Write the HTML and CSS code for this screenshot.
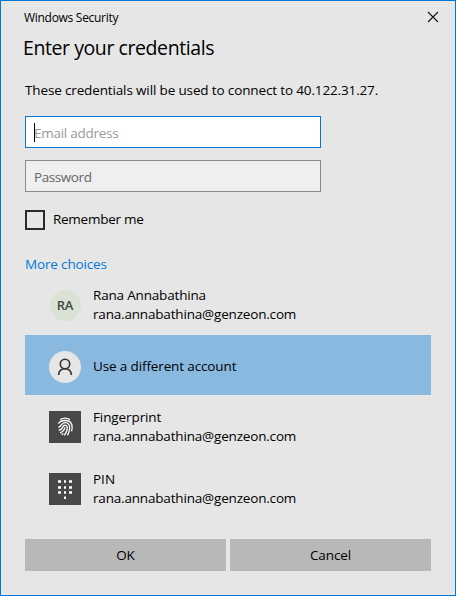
FILE: index.html
```html
<!DOCTYPE html>
<html lang="en">
<head>
<meta charset="utf-8">
<title>Windows Security</title>
<link rel="stylesheet" href="styles.css">
</head>
<body>
<main class="dialog">
  <header class="titlebar">
    <span class="caption">Windows Security</span>
    <svg class="close" width="12" height="12" viewBox="0 0 12 12"><path d="M1 1L11 11M11 1L1 11"/></svg>
  </header>
  <h1 class="heading">Enter your credentials</h1>
  <p class="message">These credentials will be used to connect to 40.122.31.27.</p>
  <div class="field field-active"><span class="caret"></span><span class="email">Email address</span></div>
  <div class="field"><span class="password">Password</span></div>
  <div class="remember"><span class="checkbox"></span><span class="remember-label">Remember me</span></div>
  <div class="more">More choices</div>
  <ul class="choices">
    <li class="choice choice-first">
      <span class="tile"><span class="initials">RA</span></span>
      <div class="lines"><div class="name-rana">Rana Annabathina</div><div class="mail">rana.annabathina@genzeon.com</div></div>
    </li>
    <li class="choice choice-selected">
      <span class="tile person">
        <svg width="32" height="32" viewBox="0 0 32 32"><circle cx="16" cy="13" r="4.7"/><path d="M9.6 24C9.8 20 12.3 17.7 16 17.7S22.2 20 22.4 24"/></svg>
      </span>
      <div class="lines"><div class="different">Use a different account</div></div>
    </li>
    <li class="choice">
      <span class="tile square">
        <svg class="finger" width="32" height="32" viewBox="0 0 32 32"><path d="M11.2 8.6C14.2 6.8 18 6.8 21 8.6M9.3 12.7C12.3 8.6 20.3 8.2 22.7 13.2C23.4 15.3 23.2 18 22.6 20.3M9.4 16.5C12.8 14.8 12.3 12 16 11.7C19.8 11.6 21 14.5 20.6 18C20.3 20.5 19.6 22.4 18.5 24.3M9.8 19.4C14.3 18.3 13.2 14.2 16.1 14.1C18.6 14.2 18.6 17.3 17.8 19.7C17.2 21.6 16.2 23.1 15 24.4M11 21.9C13.8 21 15.3 18.8 15.9 16.4M12.7 23.8L14.2 22.5"/></svg>
      </span>
      <div class="lines"><div class="name-finger">Fingerprint</div><div class="mail">rana.annabathina@genzeon.com</div></div>
    </li>
    <li class="choice">
      <span class="tile square">
        <svg class="keypad" width="32" height="32" viewBox="0 0 32 32"><path d="M9 7.3h3v2.4h-3zM15 7.3h2v2.4h-2zM20 7.3h3v2.4h-3zM9 13.2h3v2.6h-3zM15 13.2h2v2.6h-2zM20 13.2h3v2.6h-3zM9 18.2h3v2.6h-3zM15 18.2h2v2.6h-2zM20 18.2h3v2.6h-3zM15 23.6h2v2.4h-2z"/></svg>
      </span>
      <div class="lines"><div class="name-pin">PIN</div><div class="mail">rana.annabathina@genzeon.com</div></div>
    </li>
  </ul>
  <footer class="actions"><button class="action">OK</button><button class="action">Cancel</button></footer>
</main>
</body>
</html>
```
FILE: styles.css
```css
* { box-sizing: border-box; }
body { margin: 0; font-family: "Open Sans", "Noto Sans", sans-serif; font-size: 13.5px; line-height: 19px; color: #000; }
.dialog { width: 456px; height: 596px; border: 1px solid #0078d7; background: #e6e6e6; padding: 0 24px; display: flex; flex-direction: column; white-space: nowrap; overflow: hidden; }
.titlebar { height: 32px; display: flex; justify-content: space-between; align-items: center; margin: 0 -8px 0 -1px; }
.caption { font-size: 12px; letter-spacing: -0.29px; }
.close { fill: none; stroke: #111; stroke-width: 1.1; }
.heading { margin: 0 0 0 -2px; height: 30px; font-size: 19.5px; line-height: 30px; font-weight: 400; letter-spacing: -0.42px; }
.message { margin: 18px 0 16px; height: 19px; letter-spacing: -0.14px; }
.field { width: 296px; height: 32px; flex: none; border: 1px solid #8a8a8a; background: #efefef; color: #666; padding: 2px 8px 0; display: flex; align-items: center; margin-bottom: 12px; }
.field-active { border-color: #0078d7; background: #fff; color: #999; }
.caret { width: 1px; height: 19px; background: #000; margin: -1px -1px 0 0; }
.email { letter-spacing: -0.27px; }
.password { letter-spacing: -0.42px; }
.remember { display: flex; align-items: center; margin-top: 6px; height: 20px; gap: 8px; }
.remember-label { margin-top: -2px; letter-spacing: -0.27px; }
.checkbox { width: 20px; height: 20px; border: 2px solid #2b2b2b; }
.more { margin-top: 25px; height: 19px; color: #0078d7; letter-spacing: -0.15px; }
.choices { list-style: none; margin: 1px 0 0; padding: 0; display: flex; flex-direction: column; gap: 2px; }
.choice { width: 406px; height: 60px; padding-left: 24px; display: flex; align-items: center; gap: 12px; }
.choice-first { margin-bottom: -2px; }
.choice-first .tile { margin-top: 1px; }
.choice-selected { background: #8ab9e0; }
.tile { width: 32px; height: 32px; margin-top: 3px; display: flex; align-items: center; justify-content: center; }
.tile svg { display: block; fill: none; stroke: #333; stroke-width: 1.6; }
.initials { width: 31px; height: 31px; border-radius: 50%; background: #dae1d5; color: #414b3d; font-size: 13px; font-weight: 600; line-height: 31px; text-align: center; letter-spacing: -0.1px; }
.person { border-radius: 50%; background: #e6e6e6; }
.square { background: #484848; margin-top: 0; }
.tile .finger { stroke: #fff; stroke-width: 1.35; }
.tile .keypad { fill: #fff; stroke: none; }
.lines { margin-top: -1px; }
.choice-selected .lines { margin-top: 3px; }
.name-rana { letter-spacing: -0.18px; }
.mail { letter-spacing: -0.18px; }
.different { letter-spacing: -0.13px; }
.name-finger { letter-spacing: -0.1px; }
.actions { display: flex; gap: 4px; margin-top: 20px; }
.action { width: 201px; height: 32px; border: 0; padding: 0; background: #b8b8b8; color: #000; font: inherit; letter-spacing: -0.1px; }
```
